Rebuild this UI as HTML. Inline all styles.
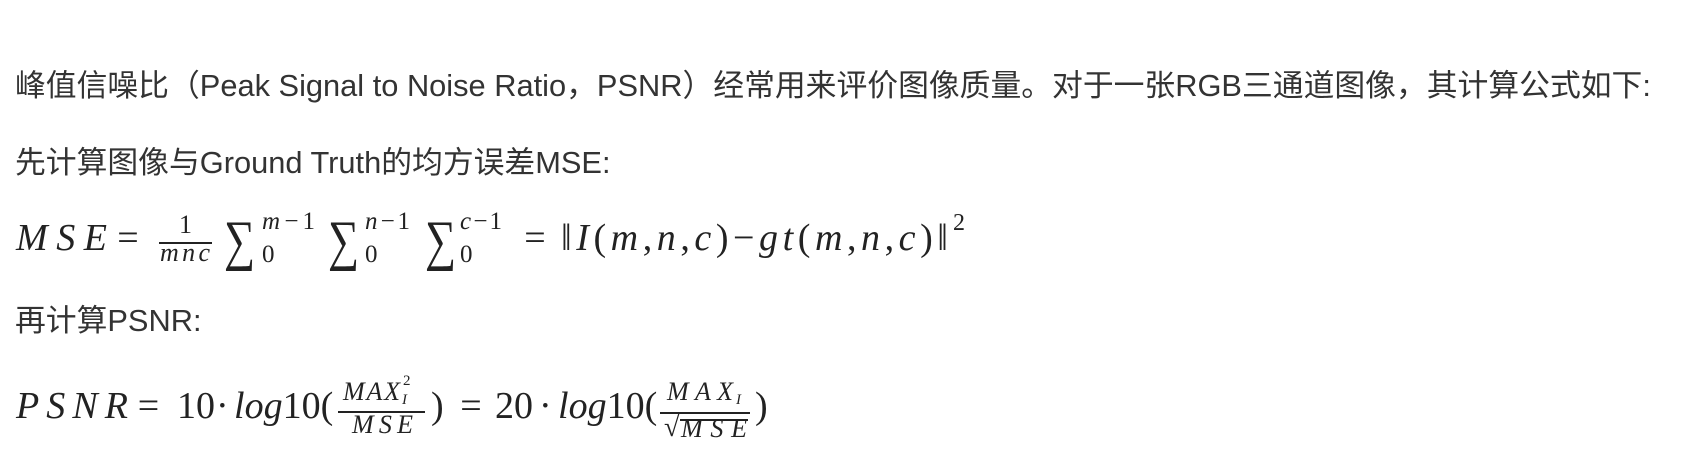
<!DOCTYPE html>
<html><head><meta charset="utf-8"><style>
body{margin:0;width:1695px;height:461px;background:#fff;color:#333;font-family:"Liberation Sans","Noto Sans CJK SC",sans-serif;position:relative;overflow:hidden}
.t{position:absolute;left:15px;font-size:30.8px;white-space:nowrap;line-height:1}
.a{position:absolute;line-height:1;white-space:nowrap;font-family:"Liberation Serif","DejaVu Serif",serif;color:#222}
.s{display:flex;justify-content:space-between}
.c{display:flex;justify-content:center}
.i{font-style:italic}
.bar{position:absolute;height:2px;background:#222}
.sum{font-size:56px;transform:scaleX(0.78);transform-origin:left}
</style></head><body>
<div class="t" style="top:71px">峰值信噪比（Peak Signal to Noise Ratio，PSNR）经常用来评价图像质量。对于一张RGB三通道图像，其计算公式如下:</div>
<div class="t" style="top:148px">先计算图像与Ground Truth的均方误差MSE:</div>
<div class="t" style="top:306px">再计算PSNR:</div>

<!-- MSE formula -->
<div class="a s i" style="left:16px;width:91px;top:219px;font-size:38px"><span>M</span><span>S</span><span>E</span></div>
<div class="a c" style="left:113px;width:30px;top:219px;font-size:38px"><span>=</span></div>
<div class="a" style="left:179px;top:212px;font-size:26px">1</div>
<div class="bar" style="left:159px;width:53px;top:242px;height:1.5px"></div>
<div class="a s i" style="left:160px;width:50px;top:240px;font-size:26px"><span>m</span><span>n</span><span>c</span></div>
<div class="a sum" style="left:224px;top:213px">∑</div>
<div class="a s i" style="left:262px;width:53px;top:209px;font-size:25px"><span>m</span><span>−</span><span style="font-style:normal">1</span></div>
<div class="a" style="left:262px;top:242px;font-size:25px">0</div>
<div class="a sum" style="left:328px;top:213px">∑</div>
<div class="a s i" style="left:365px;width:45px;top:209px;font-size:25px"><span>n</span><span>−</span><span style="font-style:normal">1</span></div>
<div class="a" style="left:365px;top:242px;font-size:25px">0</div>
<div class="a sum" style="left:425px;top:213px">∑</div>
<div class="a s i" style="left:460px;width:42px;top:209px;font-size:25px"><span>c</span><span>−</span><span style="font-style:normal">1</span></div>
<div class="a" style="left:460px;top:242px;font-size:25px">0</div>
<div class="a c" style="left:522px;width:26px;top:219px;font-size:38px"><span>=</span></div>
<div class="a s" style="left:561px;width:387px;top:219px;font-size:38px"><span>‖</span><span class="i">I</span><span>(</span><span class="i">m</span><span>,</span><span class="i">n</span><span>,</span><span class="i">c</span><span>)</span><span>−</span><span class="i">g</span><span class="i">t</span><span>(</span><span class="i">m</span><span>,</span><span class="i">n</span><span>,</span><span class="i">c</span><span>)</span><span>‖</span></div>
<div class="a" style="left:953px;top:211px;font-size:24px">2</div>

<!-- PSNR formula -->
<div class="a s i" style="left:16px;width:112px;top:387px;font-size:38px"><span>P</span><span>S</span><span>N</span><span>R</span></div>
<div class="a c" style="left:133px;width:31px;top:387px;font-size:38px"><span>=</span></div>
<div class="a s" style="left:177px;width:35px;top:387px;font-size:38px"><span>1</span><span>0</span></div>
<div class="a" style="left:216px;top:387px;font-size:38px">·</div>
<div class="a s" style="left:234px;width:98px;top:387px;font-size:38px"><span class="i">l</span><span class="i">o</span><span class="i">g</span><span>1</span><span>0</span><span>(</span></div>
<div class="a s i" style="left:343px;width:57px;top:379px;font-size:26px"><span>M</span><span>A</span><span>X</span></div>
<div class="a i" style="left:402px;top:393px;font-size:15px">I</div>
<div class="a" style="left:403px;top:374px;font-size:15px">2</div>
<div class="bar" style="left:338px;width:87px;top:411px;height:1.5px"></div>
<div class="a s i" style="left:352px;width:61px;top:412px;font-size:26px"><span>M</span><span>S</span><span>E</span></div>
<div class="a" style="left:431px;top:387px;font-size:38px">)</div>
<div class="a c" style="left:456px;width:30px;top:387px;font-size:38px"><span>=</span></div>
<div class="a s" style="left:495px;width:35px;top:387px;font-size:38px"><span>2</span><span>0</span></div>
<div class="a" style="left:539px;top:387px;font-size:38px">·</div>
<div class="a s" style="left:558px;width:95px;top:387px;font-size:38px"><span class="i">l</span><span class="i">o</span><span class="i">g</span><span>1</span><span>0</span><span>(</span></div>
<div class="a s i" style="left:667px;width:66px;top:379px;font-size:26px"><span>M</span><span>A</span><span>X</span></div>
<div class="a i" style="left:736px;top:393px;font-size:15px">I</div>
<div class="bar" style="left:660px;width:90px;top:412px;height:1.5px"></div>
<div class="a" style="left:664px;top:414px;font-size:28px">√</div>
<div class="bar" style="left:680px;width:68px;top:419px;height:1.5px"></div>
<div class="a s i" style="left:681px;width:66px;top:416px;font-size:26px"><span>M</span><span>S</span><span>E</span></div>
<div class="a" style="left:755px;top:387px;font-size:38px">)</div>
</body></html>
